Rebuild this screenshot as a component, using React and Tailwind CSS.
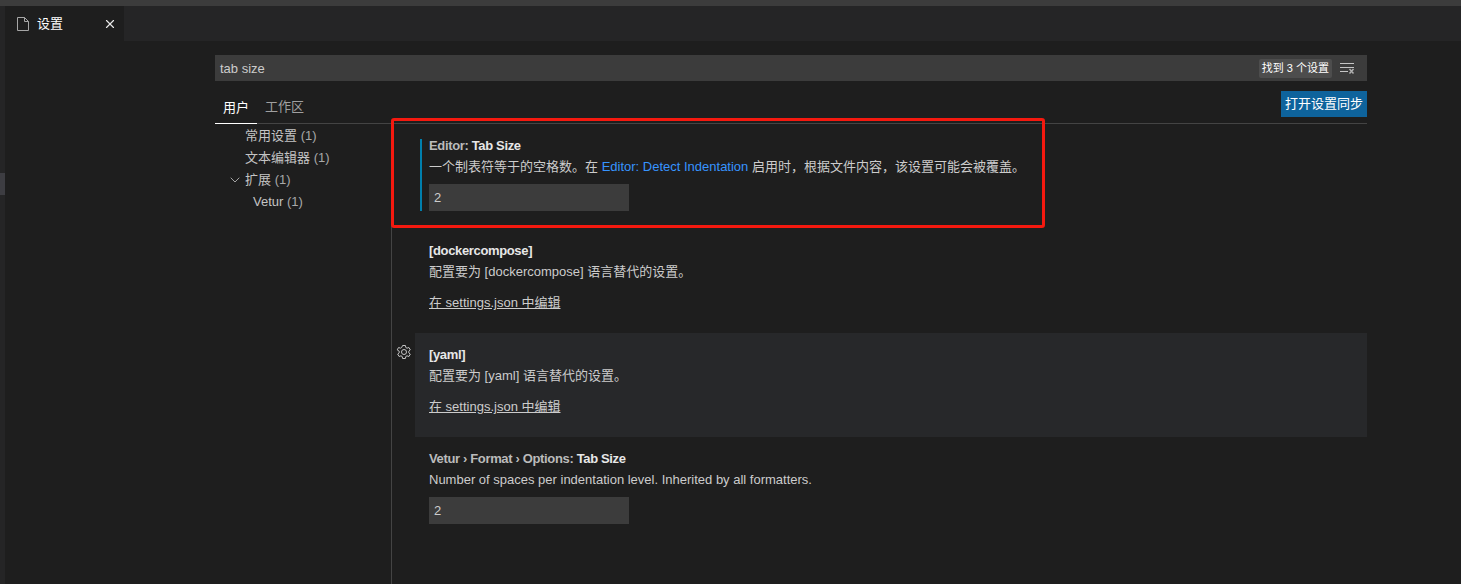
import React from 'react';
import { ChevronDown, X } from 'lucide-react';

const FONT = "font-['Segoe_UI','Liberation_Sans','Noto_Sans_CJK_SC',sans-serif]";

function FileIcon() {
  return (
    <svg width="14" height="16" viewBox="0 0 14 16" fill="none" stroke="#a6a6a6" strokeWidth="1">
      <path d="M1.5 1.5h7l4 4v9h-11z" />
      <path d="M8.5 1.5v4h4" />
    </svg>
  );
}

function ClearIcon() {
  return (
    <svg width="15" height="12" viewBox="0 0 15 12" fill="none" strokeWidth="1">
      <path d="M0 1.5h14M0 5.5h14M0 9.5h8" stroke="#c5c5c5" />
      <path d="M9.5 7l4 4.5M13.5 7l-4 4.5" stroke="#b0b0b0" strokeWidth="1.5" />
    </svg>
  );
}

function GearIcon() {
  return (
    <svg width="16" height="16" viewBox="0 0 16 16" fill="none" stroke="#c5c5c5" strokeWidth="1">
      <path d="M6.6 1.5h2.8l.4 2 1.2.7 1.9-.7 1.4 2.4-1.5 1.3v1.6l1.5 1.3-1.4 2.4-1.9-.7-1.2.7-.4 2H6.6l-.4-2-1.2-.7-1.9.7-1.4-2.4 1.5-1.3V7.2L1.2 5.9l1.4-2.4 1.9.7 1.2-.7z" />
      <circle cx="8" cy="8" r="2.5" />
    </svg>
  );
}

function TreeItem({ label, count, indent, chevron }) {
  return (
    <div className={`flex h-[22px] items-center text-[13px] text-[#c4c4c4] ${indent}`}>
      {chevron && <ChevronDown size={16} strokeWidth={1.2} className="mr-[2px] text-[#c5c5c5]" />}
      <span>{label} <span className="text-[#a8a8a8]">{count}</span></span>
    </div>
  );
}

function NumberInput() {
  return (
    <div className="mt-[6px] flex h-[27px] w-[200px] items-center bg-[#3c3c3c] px-[5px] text-[13px] text-[#cccccc]">2</div>
  );
}

function Title({ prefix, name }) {
  return (
    <div className="h-[21px] text-[13px] leading-[21px] font-semibold tracking-[-0.35px] text-[#e7e7e7]">
      {prefix && <span className="text-[#bbbbbb]">{prefix}</span>}
      {name}
    </div>
  );
}

function EditLink() {
  return <div className="mt-[9px] text-[13px] leading-[22px] text-[#cccccc] underline">在 settings.json 中编辑</div>;
}

export default function App() {
  return (
    <div className={`flex h-[584px] w-[1461px] flex-col overflow-hidden bg-[#1e1e1e] ${FONT}`}>
      <div className="h-[6px] shrink-0 bg-[#3c3c3c]" />
      <div className="flex min-h-0 flex-1">
        {/* activity bar */}
        <div className="flex w-[5px] shrink-0 flex-col bg-[#252526] pt-[167px]">
          <div className="h-[22px] bg-[#3d3d42]" />
        </div>

        <div className="flex min-w-0 flex-1 flex-col">
          {/* tabs */}
          <div className="flex h-[35px] shrink-0 bg-[#252526]">
            <div className="flex w-[119px] items-center bg-[#1e1e1e] pl-[11px] text-[13px] text-white">
              <FileIcon />
              <span className="ml-[7px]">设置</span>
              <X size={14} strokeWidth={2} className="ml-auto mr-[7px] text-[#e8e8e8]" />
            </div>
          </div>

          <div className="flex min-h-0 flex-1 flex-col pl-[210px] pr-[94px] pt-[14px]">
            {/* search */}
            <div className="flex h-[26px] shrink-0 items-center bg-[#3c3c3c] pl-[5px] text-[13px] text-[#cccccc]">
              <span className="pt-px">tab size</span>
              <span className="ml-auto rounded-[2px] bg-[#4d4d4d] px-[3px] text-[11px] leading-[19px] text-white">找到 3 个设置</span>
              <span className="ml-[8px] mr-[12px] flex"><ClearIcon /></span>
            </div>

            {/* scope tabs */}
            <div className="flex h-[43px] shrink-0 items-end border-b border-[#444444]">
              <div className="-mb-px flex h-[32px] w-[42px] items-center justify-center border-b border-white text-[13px] text-white">用户</div>
              <div className="flex h-[32px] items-center pl-[8px] text-[13px] text-[#a0a0a0]">工作区</div>
              <div className="mb-[6px] ml-auto flex h-[26px] w-[86px] items-center justify-center bg-[#0e639c] text-[13px] text-white">打开设置同步</div>
            </div>

            <div className="flex min-h-0 flex-1">
              {/* tree */}
              <div className="w-[176px] shrink-0 pt-px">
                <TreeItem label="常用设置" count="(1)" indent="pl-[30px]" />
                <TreeItem label="文本编辑器" count="(1)" indent="pl-[30px]" />
                <TreeItem label="扩展" count="(1)" indent="pl-[12px]" chevron />
                <TreeItem label="Vetur" count="(1)" indent="pl-[38px]" />
              </div>

              {/* settings */}
              <div className="relative flow-root flex-1 border-l border-[#444444] pl-[37px]">
                <div className="absolute left-[-1px] top-[-6px] h-[110px] w-[654px] rounded-[3px] border-[3px] border-[#f5190f]" />

                <div className="relative -ml-[9px] mt-[15px] flow-root h-[72px] border-l-2 border-[#007fad] pl-[7px]">
                  <div className="-mt-[4px]">
                    <Title prefix="Editor: " name="Tab Size" />
                  </div>
                  <div className="text-[13px] leading-[22px] text-[#cccccc]">
                    一个制表符等于的空格数。在 <span className="text-[#3794ff]">Editor: Detect Indentation</span> 启用时，根据文件内容，该设置可能会被覆盖。
                  </div>
                  <NumberInput />
                </div>

                <div className="mt-[29px] h-[93px]">
                  <Title name="[dockercompose]" />
                  <div className="text-[13px] leading-[22px] text-[#cccccc]">配置要为 [dockercompose] 语言替代的设置。</div>
                  <EditLink />
                </div>

                <div className="relative -ml-[14px] h-[104px] bg-[#27282a] pl-[14px] pt-[11px]">
                  <span className="absolute left-[-19px] top-[11px]"><GearIcon /></span>
                  <Title name="[yaml]" />
                  <div className="text-[13px] leading-[22px] text-[#cccccc]">配置要为 [yaml] 语言替代的设置。</div>
                  <EditLink />
                </div>

                <div className="pt-[11px]">
                  <Title prefix="Vetur › Format › Options: " name="Tab Size" />
                  <div className="text-[13px] leading-[22px] text-[#cccccc]">Number of spaces per indentation level. Inherited by all formatters.</div>
                  <NumberInput />
                </div>
              </div>
            </div>
          </div>
        </div>
      </div>
    </div>
  );
}
